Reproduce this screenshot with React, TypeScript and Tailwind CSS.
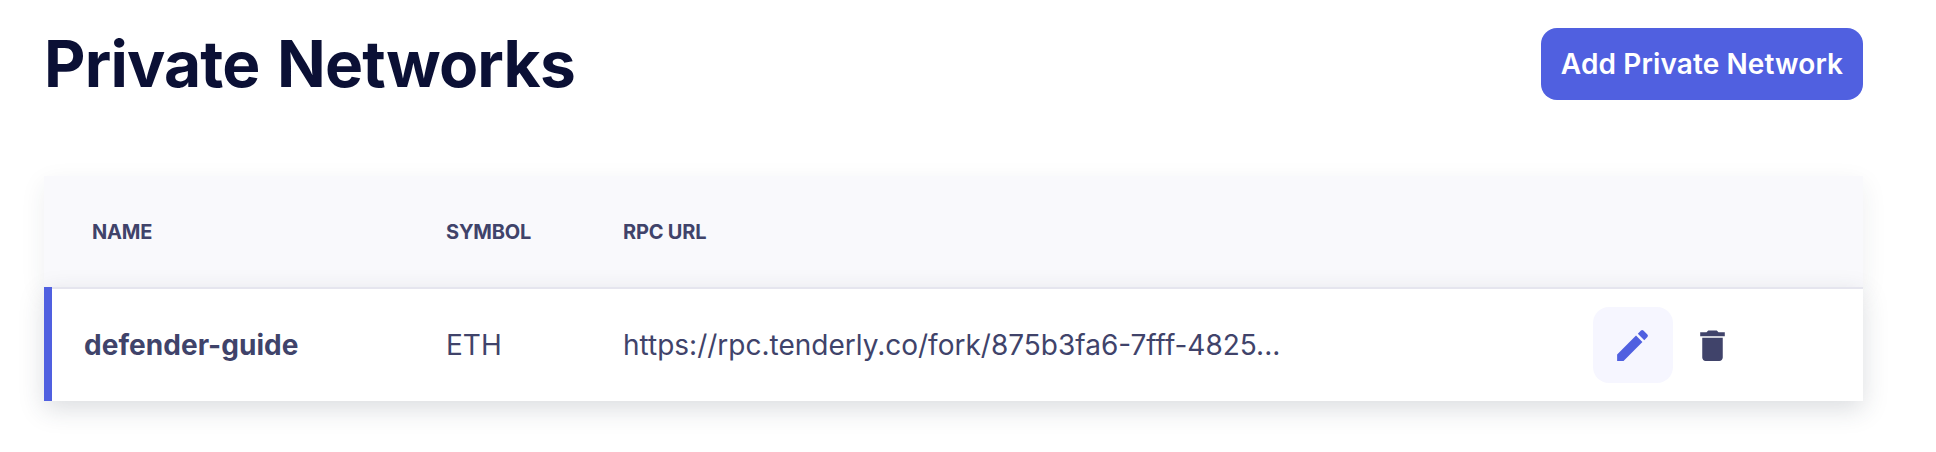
import React from "react";

export default function App() {
  return (
    <div className="flex h-[452px] w-[1936px] flex-col bg-white pl-[44px] pr-[73px] font-['Inter',sans-serif] text-[#40436a]">
      <header className="flex h-[176px] items-start justify-between pt-[28px]">
        <h1 className="mt-[-4px] text-[64px] leading-[80px] font-[650] tracking-[-0.8px] text-[#0b1035] [word-spacing:3px]">Private Networks</h1>
        <button className="h-[72px] w-[322px] rounded-[16px] bg-[#5060e0] text-[28px] font-[560] tracking-[0.12px] text-white">Add Private Network</button>
      </header>
      <section>
        <div className="grid h-[111px] grid-cols-[402px_177px_1fr] items-center bg-[#f9f9fc] text-[20px] font-bold tracking-[-0.2px] shadow-[0_8px_24px_rgba(40,50,65,0.08)]">
          <span className="pl-[48px]">NAME</span>
          <span>SYMBOL</span>
          <span>RPC URL</span>
        </div>
        <div className="flex h-[114px] bg-[#5060e0] pl-[8px] shadow-[0_8px_24px_rgba(40,55,70,0.17)]">
          <div className="grid flex-1 grid-cols-[394px_177px_970px_1fr] items-center border-t-2 border-[#e5e5ee] bg-white text-[28px]">
            <span className="pl-[32px] font-[750] tracking-[0.05px]">defender-guide</span>
            <span>ETH</span>
            <span>https://rpc.tenderly.co/fork/875b3fa6-7fff-4825...</span>
            <div className="flex items-center gap-[19px]">
              <button className="flex h-[76px] w-[80px] items-center justify-center rounded-[16px] bg-[#f6f6ff] pr-px text-[#5060e0]">
                <svg width="41" height="41" viewBox="0 0 24 24" fill="currentColor"><path d="M3 17.25V21h3.75L17.81 9.94l-3.75-3.75L3 17.25zM20.71 7.04a1 1 0 0 0 0-1.41l-2.34-2.34a1 1 0 0 0-1.41 0l-1.83 1.83 3.75 3.75 1.83-1.83z" /></svg>
              </button>
              <svg width="41" height="41" viewBox="0 0 24 24" fill="currentColor"><path d="M6 19c0 1.1.9 2 2 2h8c1.1 0 2-.9 2-2V7.4H6V19zM19.2 4.2h-3.7l-1-1h-5l-1 1H4.8v2.4h14.4V4.2z" /></svg>
            </div>
          </div>
        </div>
      </section>
    </div>
  );
}
